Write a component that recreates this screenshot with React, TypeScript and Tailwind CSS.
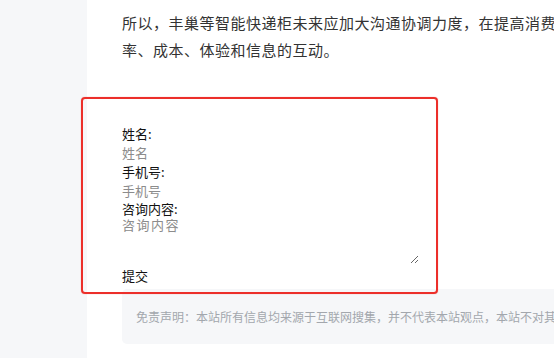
import React from 'react';

const font = { fontFamily: '"Noto Sans CJK SC", "Noto Sans", sans-serif' };

export default function App() {
  return (
    <div className="relative flex h-[358px] w-[554px] overflow-hidden bg-white" style={font}>
      <div className="w-[87px] shrink-0 bg-[#f6f7f9]" />
      <div className="flex-1 overflow-hidden">
        <div className="w-[600px] pl-[35px] pt-[9px]">
          <p className="text-[15px] leading-[27px] tracking-[0.5px] text-[#333]">
            <span className="block whitespace-nowrap">所以，丰巢等智能快递柜未来应加大沟通协调力度，在提高消费者体验的同时，平衡好效</span>
            <span className="block whitespace-nowrap">率、成本、体验和信息的互动。</span>
          </p>

          <form className="mt-[61px] flex w-[300px] flex-col text-[13px] text-[#111]">
            <label className="h-[19px] leading-[19px]">姓名:</label>
            <input
              className="h-[19px] bg-transparent leading-[19px] outline-none placeholder:text-[#8c8c8c]"
              placeholder="姓名"
            />
            <label className="h-[19px] leading-[19px]">手机号:</label>
            <input
              className="h-[19px] bg-transparent leading-[19px] outline-none placeholder:text-[#8c8c8c]"
              placeholder="手机号"
            />
            <label className="h-[17px] leading-[17px]">咨询内容:</label>
            <textarea
              className="h-[47px] w-[297px] resize bg-transparent text-[13px] leading-[16px] tracking-[1.5px] outline-none placeholder:text-[#8c8c8c]"
              placeholder="咨询内容"
            />
            <button type="button" className="mt-[2px] h-[19px] self-start leading-[19px] text-[#111]">
              提交
            </button>
          </form>

          <div className="mt-[4px] flex h-[55px] w-[520px] items-center rounded-[5px] bg-[#f6f7f9] px-[14px]">
            <span className="whitespace-nowrap text-[12px] text-[#a3a7ad]">
              免责声明：本站所有信息均来源于互联网搜集，并不代表本站观点，本站不对其真实合法性负责。
            </span>
          </div>
        </div>
      </div>

      <div className="pointer-events-none absolute left-[81px] top-[97px] h-[197px] w-[357px] rounded-[4px] border-[2px] border-[#ec2f2a] shadow-[0_0_1px_rgba(236,47,42,0.6)]" />
    </div>
  );
}
